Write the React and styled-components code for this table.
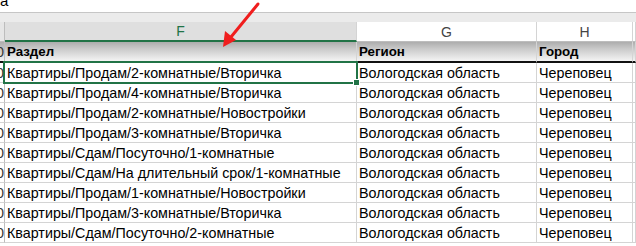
import React from "react";
import styled, { createGlobalStyle } from "styled-components";

const GlobalStyle = createGlobalStyle`
    html, body {
        margin: 0;
        padding: 0;
        background: #ffffff;
        overflow: hidden;
    }
`;

const green = "#217346";
const gridLine = "#d4d4d4";
const cols = "5px 352px 180px 96px 1fr";

const Sheet = styled.div`
    position: relative;
    width: 636px;
    height: 246px;
    overflow: hidden;
    background: #ffffff;
    font-family: "Liberation Sans", Arial, sans-serif;
    color: #000;
`;

const FormulaBar = styled.div`
    height: 13px;
    display: flex;
    align-items: flex-end;
    overflow: hidden;
    border-bottom: 1px solid #c6c6c6;
    padding-bottom: 4px;
    box-sizing: border-box;
    font-size: 15px;
    line-height: 15px;
`;

const Band = styled.div`
    height: 9px;
    background: #ebebeb;
`;

const Row = styled.div`
    display: grid;
    grid-template-columns: ${cols};
    height: ${(p) => p.$h || 20}px;
`;

const Corner = styled.div`
    background: #e6e6e6;
    border-right: 1px solid #bdbdbd;
    border-bottom: 1px solid #bdbdbd;
`;

const ColLetter = styled.div`
    display: flex;
    align-items: center;
    justify-content: center;
    box-sizing: border-box;
    font-size: 14px;
    color: ${(p) => (p.$active ? green : "#444")};
    background: ${(p) => (p.$active ? "#dfdfdf" : "#ffffff")};
    border-right: 1px solid #d4d4d4;
    border-bottom: ${(p) => (p.$active ? `2px solid ${green}` : "1px solid #bdbdbd")};
`;

const RowNum = styled.div`
    display: flex;
    align-items: center;
    justify-content: flex-end;
    overflow: hidden;
    box-sizing: border-box;
    background: #ffffff;
    border-right: 1px solid #bdbdbd;
    border-bottom: 1px solid ${gridLine};
    font-size: 15px;
    color: #3a3a3a;
    white-space: nowrap;
`;

const Cell = styled.div`
    position: relative;
    display: flex;
    align-items: center;
    box-sizing: border-box;
    padding-left: 2px;
    white-space: nowrap;
    font-size: 14.3px;
    border-right: 1px solid ${gridLine};
    border-bottom: 1px solid ${gridLine};
    background: #ffffff;

    ${(p) =>
        p.$selected &&
        `
        &::after {
            content: "";
            position: absolute;
            left: -2px;
            top: -2px;
            right: -2px;
            bottom: -2px;
            border: 2px solid ${green};
            z-index: 2;
        }
        &::before {
            content: "";
            position: absolute;
            right: -4px;
            bottom: -4px;
            width: 5px;
            height: 5px;
            background: ${green};
            border: 1px solid #fff;
            z-index: 3;
        }
    `}
`;

const HeadCell = styled(Cell)`
    font-weight: bold;
    font-size: 13.3px;
    border-bottom: 2px solid #111;
    background: linear-gradient(#adadad, #c9c9c9 35%, #f4f4f4);
`;

const HeadNum = styled(RowNum)`
    border-bottom: 2px solid #111;
    background: linear-gradient(#adadad, #f4f4f4);
`;

const Arrow = styled.svg`
    position: absolute;
    left: 0;
    top: 0;
    pointer-events: none;
`;

const rows = [
    ["Квартиры/Продам/2-комнатные/Вторичка", "Вологодская область", "Череповец"],
    ["Квартиры/Продам/4-комнатные/Вторичка", "Вологодская область", "Череповец"],
    ["Квартиры/Продам/2-комнатные/Новостройки", "Вологодская область", "Череповец"],
    ["Квартиры/Продам/3-комнатные/Вторичка", "Вологодская область", "Череповец"],
    ["Квартиры/Сдам/Посуточно/1-комнатные", "Вологодская область", "Череповец"],
    ["Квартиры/Сдам/На длительный срок/1-комнатные", "Вологодская область", "Череповец"],
    ["Квартиры/Продам/1-комнатные/Новостройки", "Вологодская область", "Череповец"],
    ["Квартиры/Продам/3-комнатные/Вторичка", "Вологодская область", "Череповец"],
    ["Квартиры/Сдам/Посуточно/2-комнатные", "Вологодская область", "Череповец"],
];

export default function App() {
    return (
        <Sheet>
            <GlobalStyle />
            <FormulaBar>а</FormulaBar>
            <Band />
            <Row $h={20}>
                <Corner />
                <ColLetter $active>F</ColLetter>
                <ColLetter>G</ColLetter>
                <ColLetter>H</ColLetter>
                <ColLetter />
            </Row>
            <Row $h={21}>
                <HeadNum>0</HeadNum>
                <HeadCell>Раздел</HeadCell>
                <HeadCell>Регион</HeadCell>
                <HeadCell>Город</HeadCell>
                <HeadCell />
            </Row>
            {rows.map((r, i) => (
                <Row key={i}>
                    <RowNum>{(i + 1) * 10}</RowNum>
                    <Cell $selected={i === 0}>{r[0]}</Cell>
                    <Cell>{r[1]}</Cell>
                    <Cell>{r[2]}</Cell>
                    <Cell />
                </Row>
            ))}
            <Arrow width="636" height="246" viewBox="0 0 636 246">
                <line x1="258" y1="4" x2="231" y2="37" stroke="#f01e1e" strokeWidth="3" strokeLinecap="round" />
                <polygon points="223,47 225,31 236,40" fill="#f01e1e" />
            </Arrow>
        </Sheet>
    );
}
